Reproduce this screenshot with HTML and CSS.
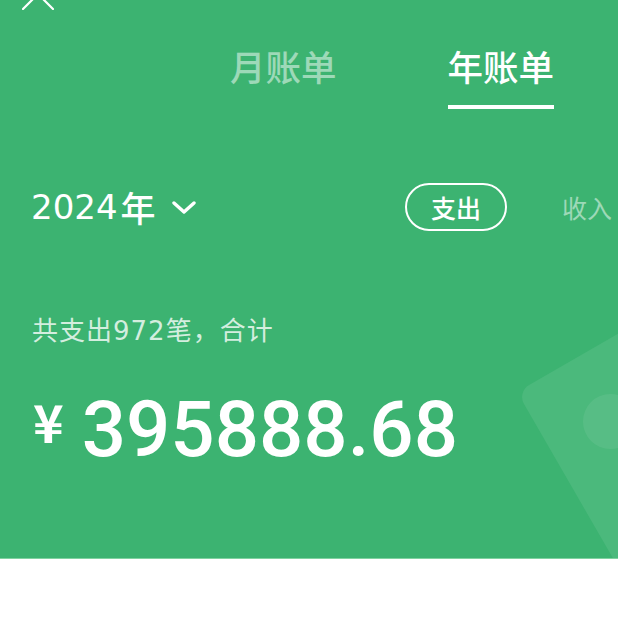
FILE: index.html
```html
<!DOCTYPE html>
<html lang="zh">
<head>
<meta charset="utf-8">
<title>年账单</title>
<link rel="stylesheet" href="styles.css">
</head>
<body>
<section class="panel">
  <div class="deco-square"></div>
  <div class="deco-circle"></div>
  <div class="topbar">
    <svg class="close" viewBox="0 0 32 32" width="32" height="32">
      <path d="M1 1 L31 31 M31 1 L1 31" stroke="#fff" stroke-width="2.2" stroke-linecap="round" fill="none"/>
    </svg>
  </div>
  <nav class="tabs">
    <div class="tab">月账单</div>
    <div class="tab active">年账单<span class="tab-bar"></span></div>
  </nav>
  <div class="filter-row">
    <div class="year">2024<span class="year-unit">年</span>
      <svg class="chev" viewBox="0 0 24 14" width="24" height="14">
        <path d="M2 2 L12 11 L22 2" stroke="#fff" stroke-width="3.4" stroke-linecap="round" stroke-linejoin="round" fill="none"/>
      </svg>
    </div>
    <div class="types">
      <div class="type active">支出</div>
      <div class="type">收入</div>
    </div>
  </div>
  <p class="summary">共支出972笔，合计</p>
  <div class="amount"><span class="cur">¥</span><span class="num">395888.68</span></div>
</section>
<div class="below"></div>
</body>
</html>
```

FILE: styles.css
```css
html, body {
  margin: 0;
  padding: 0;
  background: #fff;
}
body {
  width: 618px;
  height: 618px;
  overflow: hidden;
  font-family: "DejaVu Sans", "Noto Sans CJK SC", sans-serif;
}
.panel {
  position: relative;
  height: 558px;
  background: #3cb371;
  border-bottom: 1px solid #7fd2a0;
  overflow: hidden;
  color: #fff;
}
.deco-square {
  position: absolute;
  left: 517px;
  top: 392px;
  width: 240px;
  height: 240px;
  border-radius: 14px;
  background: rgba(255, 255, 255, 0.08);
  transform-origin: 0 0;
  transform: rotate(-30deg);
}
.deco-circle {
  position: absolute;
  left: 583px;
  top: 394px;
  width: 55px;
  height: 55px;
  border-radius: 50%;
  background: rgba(255, 255, 255, 0.07);
}
.topbar {
  display: flex;
  height: 0;
  padding-left: 22px;
}
.close {
  display: block;
  flex: none;
  margin-top: -22px;
}
.tabs {
  display: flex;
  gap: 111px;
  padding-left: 230px;
  padding-top: 48px;
}
.tab {
  font-family: "Noto Sans CJK SC", sans-serif;
  font-size: 35.5px;
  line-height: 35px;
  font-weight: 500;
  color: rgba(255, 255, 255, 0.5);
  display: flex;
  flex-direction: column;
}
.tab.active {
  color: #fff;
}
.tab-bar {
  display: block;
  height: 4px;
  margin-top: 22px;
  background: #fff;
}
.filter-row {
  display: flex;
  align-items: center;
  padding-left: 31px;
  margin-top: 74px;
}
.year {
  display: flex;
  align-items: center;
  font-family: "DejaVu Sans", "Noto Sans CJK SC", sans-serif;
  font-size: 34px;
  line-height: 48px;
  font-weight: 500;
}
.year-unit {
  font-family: "Noto Sans CJK SC", sans-serif;
  font-size: 35px;
  margin-left: 3px;
}
.chev {
  margin-left: 16px;
  margin-top: 2px;
}
.types {
  display: flex;
  align-items: center;
  gap: 55px;
  margin-left: auto;
  margin-right: 6px;
}
.type {
  font-family: "Noto Sans CJK SC", sans-serif;
  font-size: 25px;
  line-height: 25px;
  color: rgba(255, 255, 255, 0.5);
}
.type.active {
  color: #fff;
  width: 98px;
  height: 44px;
  border: 2px solid #fff;
  border-radius: 24px;
  display: flex;
  align-items: center;
  justify-content: center;
  font-weight: 500;
}
.summary {
  margin: 86px 0 0 32px;
  font-family: "DejaVu Sans", "Noto Sans CJK SC", sans-serif;
  font-size: 26px;
  line-height: 28px;
  letter-spacing: 1px;
  color: rgba(255, 255, 255, 0.78);
}
.amount {
  display: flex;
  align-items: flex-start;
  margin: 50px 0 0 33px;
}
.cur {
  font-family: "Noto Sans CJK SC", sans-serif;
  font-size: 52px;
  line-height: 52px;
  font-weight: 700;
}
.num {
  font-family: Roboto, sans-serif;
  font-size: 78px;
  line-height: 70px;
  font-weight: 500;
  margin-left: 18px;
}
.below {
  height: 59px;
  background: #fff;
}
```
